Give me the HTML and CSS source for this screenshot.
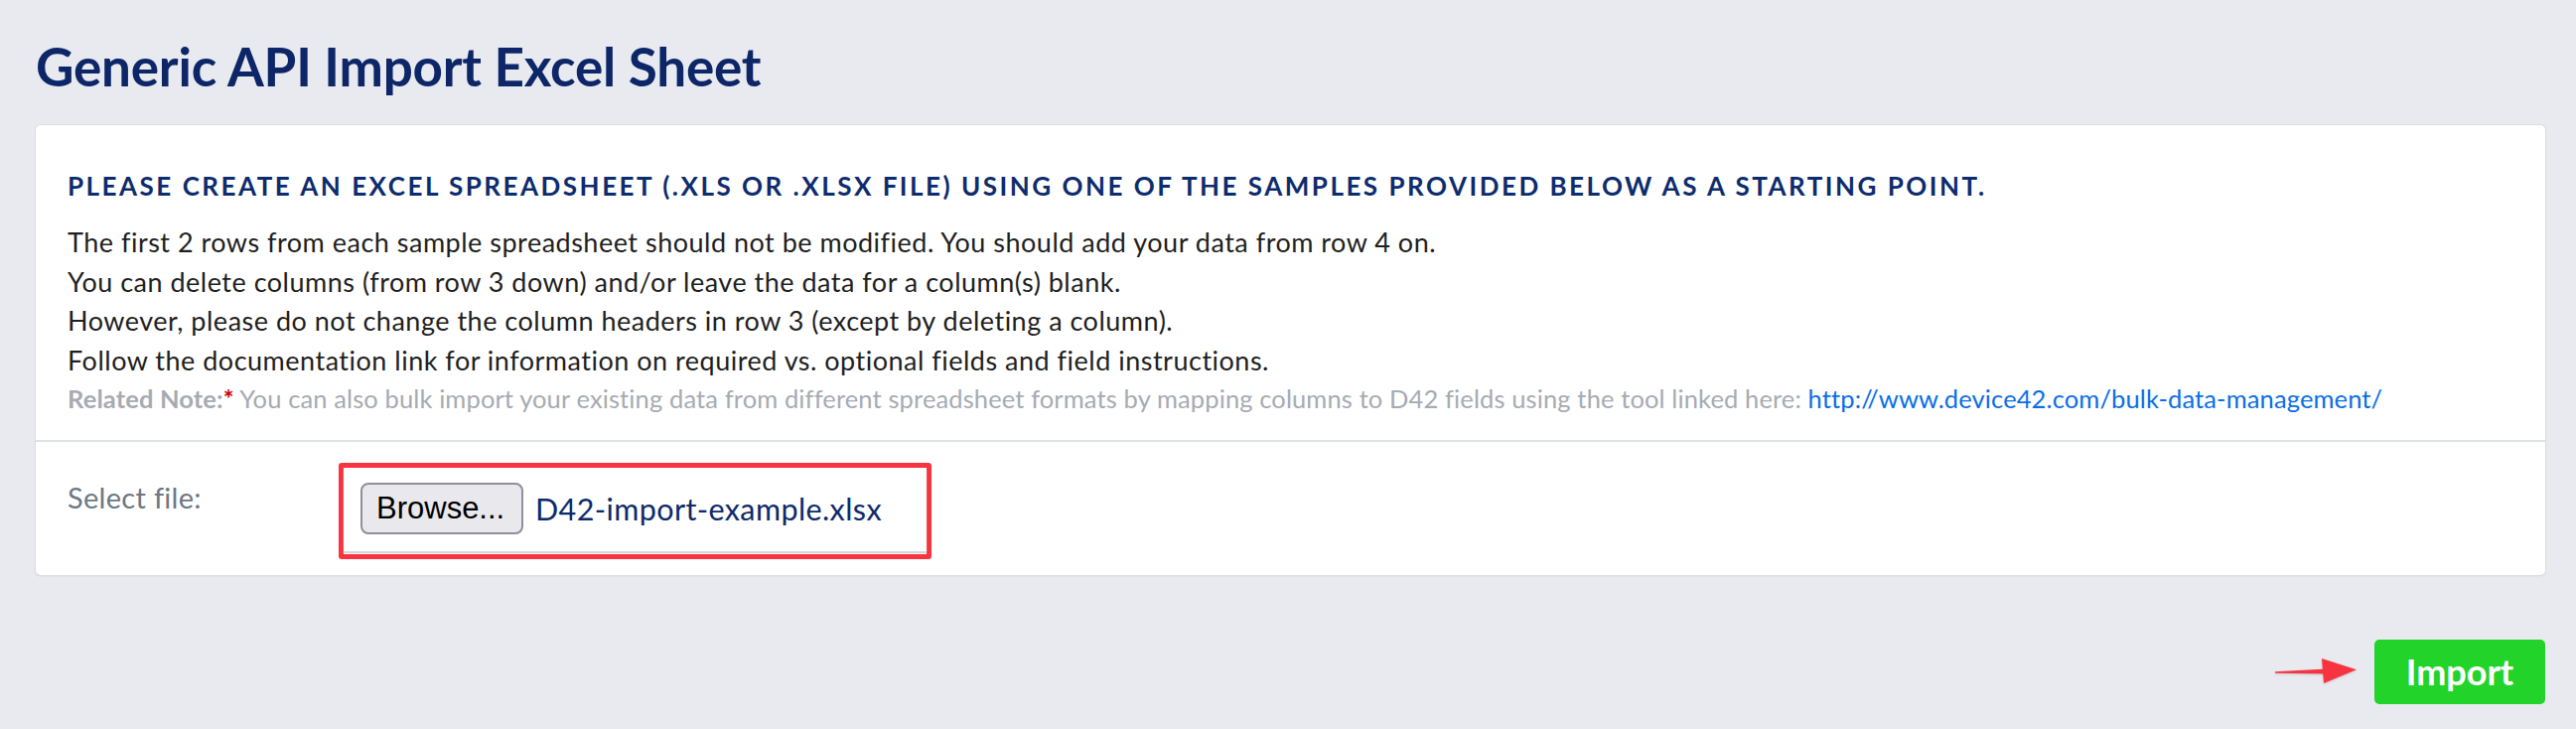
FILE: index.html
```html
<!DOCTYPE html>
<html lang="en">
<head>
<meta charset="utf-8">
<title>Generic API Import Excel Sheet</title>
<link rel="stylesheet" href="styles.css">
</head>
<body>
<div class="page">
  <h1 class="title">Generic API Import Excel Sheet</h1>
  <div class="card">
    <div class="card-body">
      <h2 class="heading">Please create an Excel spreadsheet (.xls or .xlsx file) using one of the samples provided below as a starting point.</h2>
      <p class="line">The first 2 rows from each sample spreadsheet should not be modified. You should add your data from row 4 on.</p>
      <p class="line">You can delete columns (from row 3 down) and/or leave the data for a column(s) blank.</p>
      <p class="line">However, please do not change the column headers in row 3 (except by deleting a column).</p>
      <p class="line">Follow the documentation link for information on required vs. optional fields and field instructions.</p>
      <p class="note"><b>Related Note:</b><span class="req">*</span> You can also bulk import your existing data from different spreadsheet formats by mapping columns to D42 fields using the tool linked here: <a class="link" href="#">http://www.device42.com/bulk-data-management/</a></p>
    </div>
    <div class="card-form">
      <label class="label">Select file:</label>
      <div class="annot">
        <div class="file-input">
          <span class="browse">Browse...</span>
          <span class="fname">D42-import-example.xlsx</span>
        </div>
      </div>
    </div>
  </div>
  <div class="actions">
    <svg class="arrow" width="82" height="26" viewBox="0 0 82 26">
      <polygon points="0,13.2 52,10.6 52,15.4 0,14.8" fill="#f7333f"/>
      <polygon points="47,0 82,11.3 49,25" fill="#f7333f"/>
    </svg>
    <button class="import">Import</button>
  </div>
</div>
</body>
</html>
```
FILE: styles.css
```css
body {
  margin: 0;
  background: #e9eaef;
}
.page {
  padding: 0 31px 0 36px;
}
.title {
  margin: 0;
  padding-top: 40px;
  font-family: Lato, sans-serif;
  font-weight: 700;
  font-size: 53px;
  line-height: 53px;
  letter-spacing: -0.2px;
  color: #0c2668;
}
.card {
  margin-top: 33px;
  background: #fff;
  border-radius: 5px;
  box-shadow: 0 0 0 1px #dcdde2, 0 1px 3px rgba(0, 0, 0, 0.08);
}
.card-body {
  padding: 45px 32px 21px 32px;
  font-family: Lato, sans-serif;
}
.heading {
  margin: 0 0 21px 0;
  font-size: 26px;
  line-height: 32px;
  font-weight: 700;
  letter-spacing: 2.5px;
  text-transform: uppercase;
  color: #0d2c6e;
}
.line, .note {
  margin: 0;
  font-size: 27px;
  line-height: 39.5px;
  letter-spacing: 0.5px;
  color: #1f1f1f;
  white-space: nowrap;
}
.note {
  font-size: 25.5px;
  letter-spacing: 0.12px;
  color: #a6abb3;
}
.note b {
  font-weight: 700;
}
.req {
  color: #cc0000;
  font-weight: 700;
}
.link {
  color: #0a6fe6;
  text-decoration: none;
}
.card-form {
  border-top: 2px solid #dfe2e6;
  display: flex;
  align-items: flex-start;
  padding: 21px 32px 16px 32px;
  font-family: Lato, sans-serif;
}
.label {
  width: 273px;
  flex: none;
  padding-top: 16px;
  font-size: 29px;
  line-height: 38px;
  letter-spacing: 0.3px;
  color: #6c7884;
}
.annot {
  width: 587px;
  border: 5px solid #f9343f;
  border-radius: 3px;
}
.file-input {
  height: 84px;
  box-sizing: border-box;
  padding: 15px 0 0 17px;
  display: flex;
  align-items: flex-start;
  box-shadow: 0 2px 1px #d5d6da;
  margin-bottom: 3px;
}
.browse {
  box-sizing: border-box;
  width: 164px;
  height: 52px;
  border: 2px solid #8f8f9d;
  border-radius: 8px;
  background: #e9e9ed;
  font-family: "Liberation Sans", Arial, sans-serif;
  font-size: 31px;
  line-height: 48px;
  color: #000;
  padding-left: 14px;
}
.fname {
  margin-left: 12px;
  font-size: 30.5px;
  line-height: 52px;
  letter-spacing: 0.4px;
  color: #0d2a6b;
}
.actions {
  margin-top: 65px;
  display: flex;
  justify-content: flex-end;
  align-items: center;
  gap: 18px;
}
.arrow {
  display: block;
  filter: drop-shadow(0 1px 1px rgba(0, 0, 0, 0.15));
}
.import {
  width: 172px;
  height: 65px;
  border: 0;
  border-radius: 5px;
  background: #22d32a;
  color: #fff;
  font-family: Lato, sans-serif;
  font-weight: 700;
  font-size: 36px;
  padding: 0;
}
```
